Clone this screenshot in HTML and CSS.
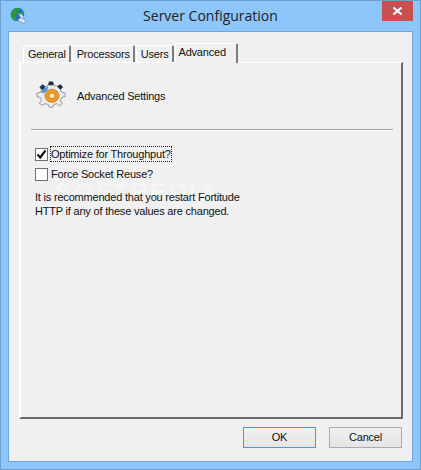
FILE: index.html
```html
<!DOCTYPE html>
<html lang="en">

<head>
    <meta charset="utf-8">
    <title>Server Configuration</title>
    <link rel="stylesheet" href="styles.css">
</head>

<body>
    <div class="window">
        <div class="title-bar">
            <div class="title-left">
                <svg class="app-icon" width="18" height="18" viewBox="0 0 18 18">
                    <circle cx="7.5" cy="7.5" r="6.8" fill="#1f6fc4"/>
                    <path d="M2 5 C3 2 6 0.8 8.5 1 L9.5 3 L7 4.5 L7.5 7 L5.5 9.5 L6.5 13.5 C4 13.5 2 11 1.2 8.5 Z" fill="#2f9a35"/>
                    <path d="M10 6 L12 5 L13.5 7.5 L11 8 Z" fill="#46ad3c"/>
                    <path d="M8.5 6.5 L13 8.5 L14 12 L11 11 Z" fill="#e6edf5" stroke="#8da4bd" stroke-width=".6"/>
                    <path d="M7.5 13 L11 10.5 L16.5 14 L13.5 16.5 Z" fill="#dfe6ef" stroke="#6f7f96" stroke-width=".7"/>
                </svg>
            </div>
            <div class="title-text">Server Configuration</div>
            <div class="title-right">
                <div class="close-btn">
                    <svg width="9" height="8" viewBox="0 0 9 8">
                        <path d="M0.5 0.5 L8.5 7.5 M8.5 0.5 L0.5 7.5" stroke="#fff" stroke-width="2"/>
                    </svg>
                </div>
            </div>
        </div>

        <div class="client">
            <div class="tabs">
                <div class="tab">General</div>
                <div class="tab">Processors</div>
                <div class="tab">Users</div>
                <div class="tab active">Advanced</div>
            </div>

            <div class="panel">
                <div class="watermark">SOFTPEDIA</div>

                <div class="panel-head">
                    <svg class="gear" width="30" height="28" viewBox="0 0 32 32" preserveAspectRatio="none">
                        <path d="M14 2 L18 2 L19 6 L22.5 7.5 L26 5 L28.5 8 L26 11 L27.5 14 L31 15 L31 19 L27.5 20 L26 23.5 L28 27 L25 29.5 L22 27 L19 28 L18 31 L14 31 L13 28 L9.5 27 L6.5 29 L3.5 26.5 L6 23 L4.5 20 L1 19 L1 15 L4.5 14 L6 11 L4 8 L7 5 L10 7.5 L13 6 Z" fill="#e9ebee" stroke="#8b9097" stroke-width="1"/>
                        <path d="M14 2 L18 2 L19 6 L13 6 Z M4 8 L7 5 L10 7.5 L8 11 L6 11 Z" fill="#2c3340"/>
                        <path d="M22.5 7.5 L26 5 L28.5 8 L26 11 Z" fill="#23282f"/>
                        <path d="M9 9 L13 7 L12 12 L8 15 L5 14 Z" fill="#4f93cf"/>
                        <circle cx="17" cy="18" r="7.5" fill="#f09a1e" stroke="#b9772a" stroke-width=".8"/>
                        <circle cx="17" cy="18" r="3.4" fill="#fbe3b4" stroke="#c47a16" stroke-width="1"/>
                    </svg>
                    <span class="head-label">Advanced Settings</span>
                </div>

                <div class="divider"></div>

                <label class="check-row">
                    <span class="box">
                        <svg width="11" height="11" viewBox="0 0 11 11">
                            <path d="M1.5 5.5 L4.2 8.5 L9.5 1.5" fill="none" stroke="#111" stroke-width="2.2"/>
                        </svg>
                    </span>
                    <span class="check-label focused">Optimize for Throughput?</span>
                </label>
                <label class="check-row">
                    <span class="box"></span>
                    <span class="check-label">Force Socket Reuse?</span>
                </label>

                <p class="note">It is recommended that you restart Fortitude<br>HTTP if any of these values are changed.</p>
            </div>

            <div class="footer">
                <div class="btn default">OK</div>
                <div class="btn">Cancel</div>
            </div>
        </div>
    </div>
</body>

</html>
```

FILE: styles.css
```css
html {
    box-sizing: border-box;
}

*, *::before, *::after {
    box-sizing: inherit;
}

body {
    margin: 0px;
    font-family: "Liberation Sans", Arial, sans-serif;
    font-size: 11px;
    letter-spacing: -0.2px;
    color: #111;
}

.window {
    width: 421px;
    height: 470px;
    display: flex;
    flex-direction: column;
    background-color: #8cc6fb;
    border: 1px solid #6f9fcc;
    padding: 0px 7px 7px;
}

.title-bar {
    height: 30px;
    flex-shrink: 0;
    display: grid;
    grid-template-columns: 1fr auto 1fr;
}

.title-left {
    padding: 6px 0px 0px 2px;
}

.app-icon {
    display: block;
}

.title-text {
    font-family: "Open Sans", sans-serif;
    font-size: 14px;
    letter-spacing: 0px;
    line-height: 30px;
    color: #222;
}

.title-right {
    display: flex;
    justify-content: flex-end;
}

.close-btn {
    width: 31px;
    height: 20px;
    background-color: #c75050;
    display: flex;
    align-items: center;
    justify-content: center;
}

.client {
    flex: 1;
    display: flex;
    flex-direction: column;
    background-color: #f0f0f0;
    border: 1px solid #6ea5dc;
    padding: 13px 9px 0px 10px;
}

.tabs {
    display: flex;
    height: 17px;
    padding-left: 4px;
    gap: 1px;
    align-items: flex-end;
}

.tab {
    height: 17px;
    padding: 0px 3px 0px 4px;
    line-height: 16px;
    border-top: 1px solid #fff;
    border-left: 1px solid #fff;
    border-right: 2px solid #7d7d7d;
    border-radius: 2px 2px 0px 0px;
}

.tab.active {
    height: 20px;
    padding: 0px 10px 0px 3px;
    margin-bottom: -1px;
    background-color: #f0f0f0;
    position: relative;
    z-index: 1;
}

.panel {
    height: 357px;
    position: relative;
    border-top: 1px solid #fff;
    border-left: 2px solid #fff;
    border-right: 2px solid #696969;
    border-bottom: 2px solid #696969;
    padding: 15px 8px 0px 10px;
}

.panel-head {
    display: flex;
    align-items: center;
    height: 32px;
    gap: 11px;
    padding-left: 5px;
}

.head-label {
    position: relative;
    top: 2px;
}

.divider {
    height: 2px;
    margin-top: 19px;
    background-color: #a0a0a0;
    border-bottom: 1px solid #fff;
}

.check-row {
    display: flex;
    align-items: center;
    height: 20px;
    padding-left: 4px;
    gap: 2px;
}

.divider + .check-row {
    margin-top: 13px;
}

.box {
    width: 13px;
    height: 13px;
    background-color: #fff;
    border: 1px solid #707070;
    display: flex;
    align-items: center;
    justify-content: center;
}

.check-label {
    padding: 1px 0px;
    border: 1px dotted transparent;
}

.check-label.focused {
    border-color: #222;
}

.note {
    position: relative;
    margin: 6px 0px 0px 4px;
    line-height: 14px;
}

.watermark {
    position: absolute;
    left: 34px;
    top: 121px;
    font-size: 24px;
    line-height: 16px;
    font-weight: bold;
    letter-spacing: 3px;
    color: #fff;
    opacity: 0.35;
}

.footer {
    display: flex;
    justify-content: flex-end;
    gap: 13px;
    margin-top: 8px;
    padding-right: 1px;
}

.btn {
    width: 73px;
    height: 21px;
    line-height: 19px;
    text-align: center;
    border: 1px solid #acacac;
    background: linear-gradient(#f0f0f0, #e5e5e5);
}

.btn.default {
    border-color: #4a96e8;
}
```
